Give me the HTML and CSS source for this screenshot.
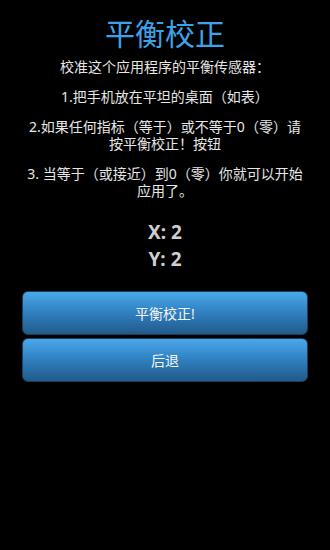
FILE: index.html
```html
<!DOCTYPE html>
<html lang="zh">
<head>
    <meta charset="UTF-8">
    <meta name="viewport" content="width=device-width, initial-scale=1.0">
    <title>平衡校正</title>
    <link rel="stylesheet" href="styles.css">
</head>
<body>
    <h1 class="title">平衡校正</h1>
    <div class="steps">
        <p>校准这个应用程序的平衡传感器：</p>
        <p>1.把手机放在平坦的桌面（如表）</p>
        <p>2.如果任何指标（等于）或不等于0（零）请<br>按平衡校正！按钮</p>
        <p>3. 当等于（或接近）到0（零）你就可以开始<br>应用了。</p>
    </div>
    <div class="values">
        <div id="valueX">X: 2</div>
        <div id="valueY">Y: 2</div>
    </div>
    <div class="button-group">
        <button class="btn" onclick="calibrate()">平衡校正!</button>
        <button class="btn" onclick="history.back()">后退</button>
    </div>

    <script>
        function calibrate() {
            document.getElementById('valueX').textContent = 'X: 0';
            document.getElementById('valueY').textContent = 'Y: 0';
        }
    </script>
</body>
</html>
```

FILE: styles.css
```css
body {
    margin: 0;
    background-color: #000000;
    color: #e6e6e6;
    font-family: "Noto Sans", "Noto Sans CJK SC", sans-serif;
}
.title {
    margin: 14px 0 0;
    font-size: 30px;
    line-height: 36px;
    font-weight: normal;
    text-align: center;
    color: #3ca3ea;
    font-family: "Noto Sans CJK SC", sans-serif;
}
.steps {
    margin-top: 8px;
    padding: 0 16px;
    text-align: center;
}
.steps p {
    margin: 0 0 13px;
    font-size: 14px;
    line-height: 17px;
}
.values {
    margin-top: 20px;
    text-align: center;
    font-size: 19px;
    line-height: 27px;
    font-weight: bold;
    color: #cfcfcf;
}
.button-group {
    display: flex;
    flex-direction: column;
    gap: 3px;
    margin: 18px 22px 0;
}
.btn {
    height: 44px;
    border: 1px solid #1a3f5e;
    border-radius: 6px;
    background: linear-gradient(#4aa8ea, #2f7fbf 50%, #215a8a);
    color: #f5f5f5;
    font-size: 14px;
    font-family: "Noto Sans", "Noto Sans CJK SC", sans-serif;
}
```
